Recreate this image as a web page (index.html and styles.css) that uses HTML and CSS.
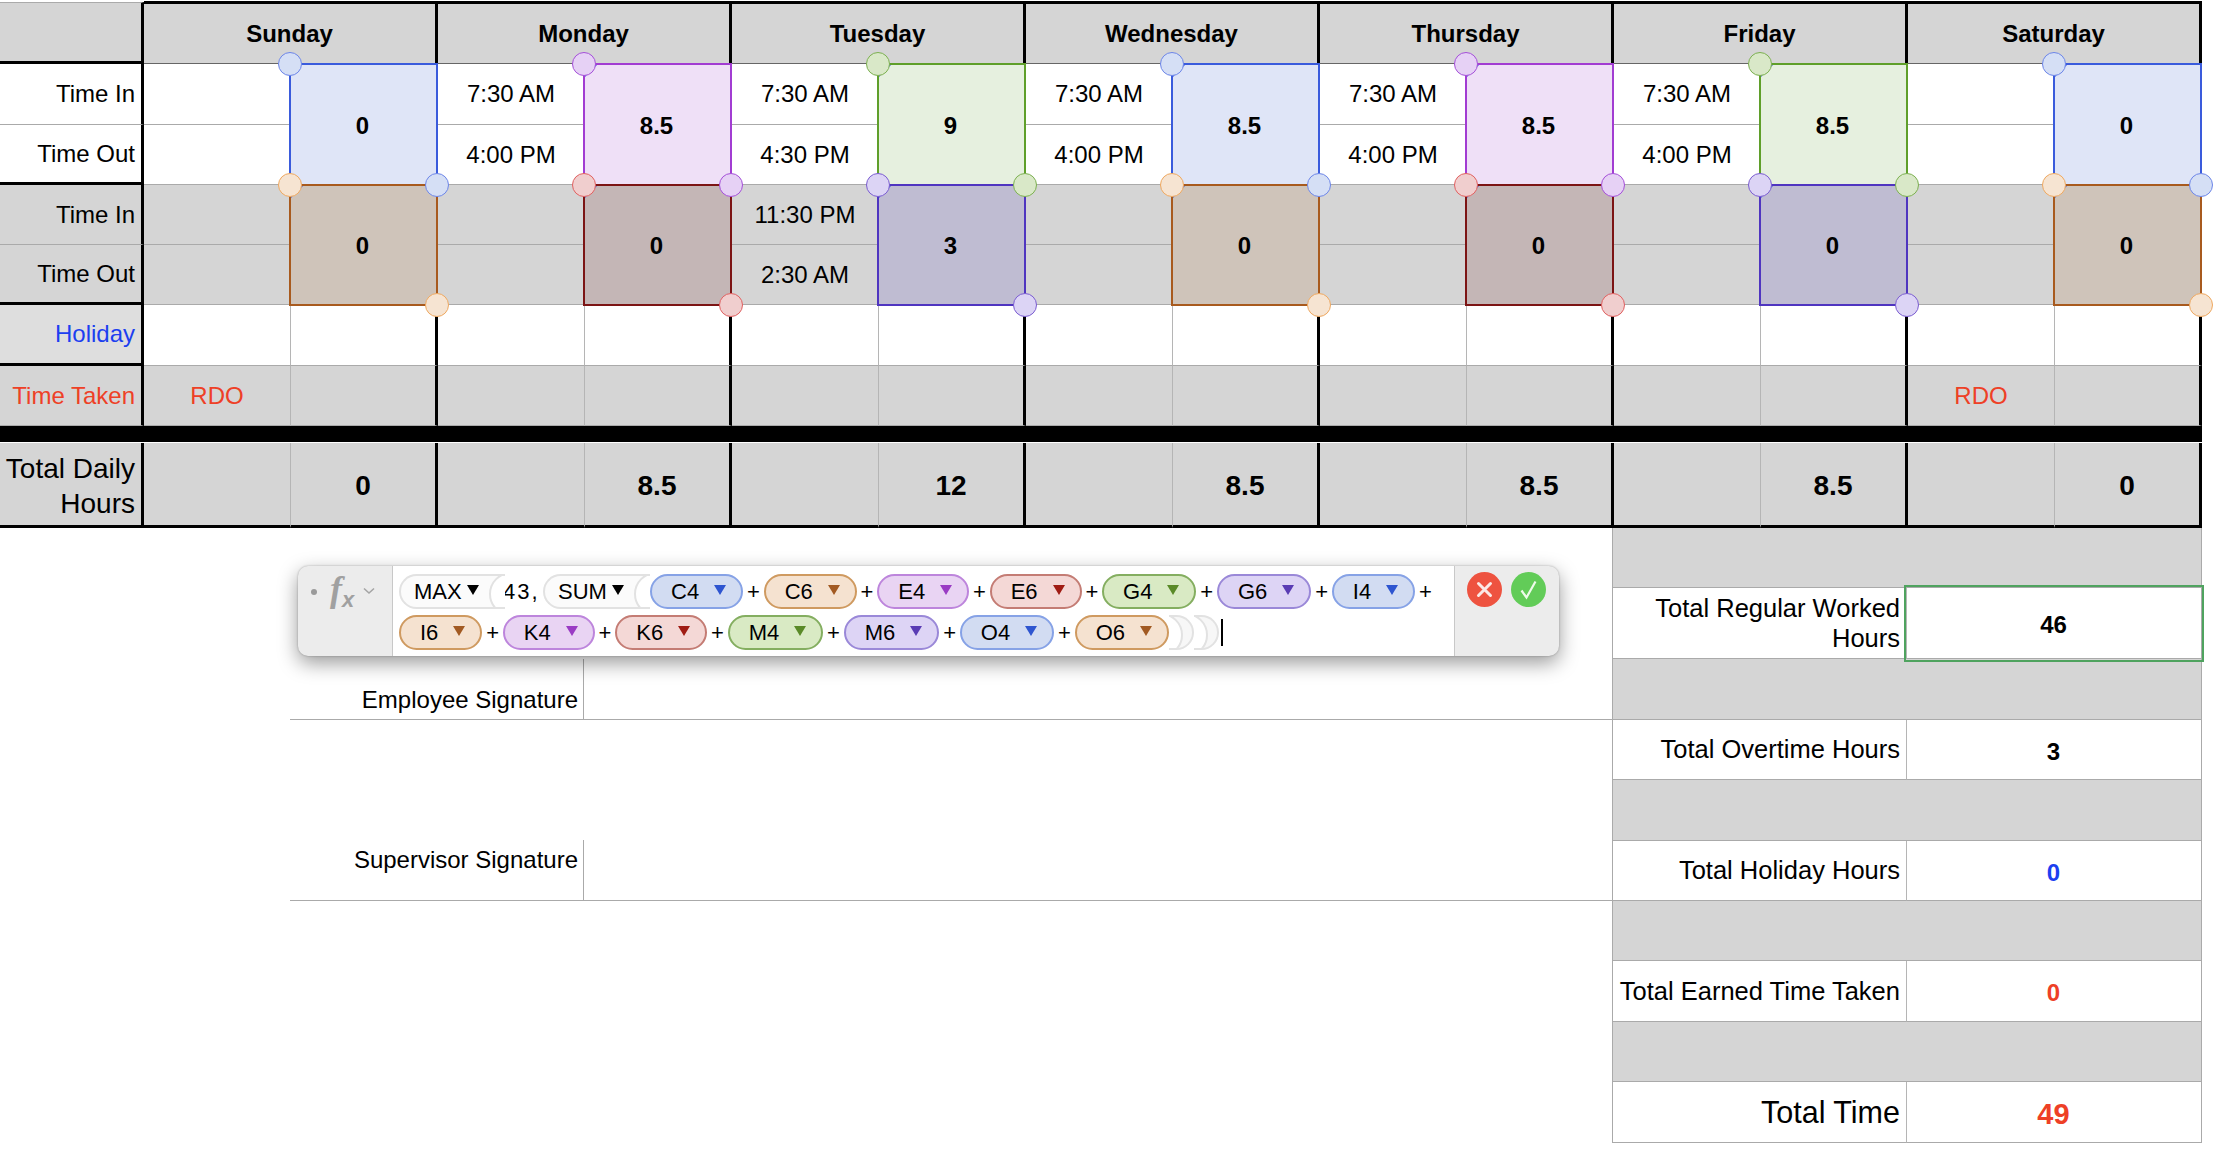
FILE: index.html
```html
<!DOCTYPE html>
<html lang="en">
<head>
  <meta charset="UTF-8" />
  <title>Timesheet</title>
  <link rel="stylesheet" href="styles.css">
</head>
<body>

  <main class="sheet">
    <!-- day headers -->
    <div class="corner"></div>
    <div class="day">Sunday</div>
    <div class="day">Monday</div>
    <div class="day">Tuesday</div>
    <div class="day">Wednesday</div>
    <div class="day">Thursday</div>
    <div class="day">Friday</div>
    <div class="day">Saturday</div>

    <!-- regular shift -->
    <div class="label">Time In</div>
    <div class="cell"></div>
    <div class="range blue no-mark"><i class="knob tl"></i>0<i class="knob br"></i></div>
    <div class="cell">7:30 AM</div>
    <div class="range purple"><i class="knob tl"></i>8.5<i class="knob br"></i></div>
    <div class="cell">7:30 AM</div>
    <div class="range green"><i class="knob tl"></i>9<i class="knob br"></i></div>
    <div class="cell">7:30 AM</div>
    <div class="range blue"><i class="knob tl"></i>8.5<i class="knob br"></i></div>
    <div class="cell">7:30 AM</div>
    <div class="range purple"><i class="knob tl"></i>8.5<i class="knob br"></i></div>
    <div class="cell">7:30 AM</div>
    <div class="range green"><i class="knob tl"></i>8.5<i class="knob br"></i></div>
    <div class="cell"></div>
    <div class="range blue"><i class="knob tl"></i>0<i class="knob br"></i></div>

    <div class="label block-end">Time Out</div>
    <div class="cell"></div>
    <div class="cell">4:00 PM</div>
    <div class="cell">4:30 PM</div>
    <div class="cell">4:00 PM</div>
    <div class="cell">4:00 PM</div>
    <div class="cell">4:00 PM</div>
    <div class="cell"></div>

    <!-- second shift -->
    <div class="label shade">Time In</div>
    <div class="cell shade"></div>
    <div class="range brown"><i class="knob tl"></i>0<i class="knob br"></i></div>
    <div class="cell shade"></div>
    <div class="range red"><i class="knob tl"></i>0<i class="knob br"></i></div>
    <div class="cell shade">11:30 PM</div>
    <div class="range indigo"><i class="knob tl"></i>3<i class="knob br"></i></div>
    <div class="cell shade"></div>
    <div class="range brown"><i class="knob tl"></i>0<i class="knob br"></i></div>
    <div class="cell shade"></div>
    <div class="range red"><i class="knob tl"></i>0<i class="knob br"></i></div>
    <div class="cell shade"></div>
    <div class="range indigo"><i class="knob tl"></i>0<i class="knob br"></i></div>
    <div class="cell shade"></div>
    <div class="range brown"><i class="knob tl"></i>0<i class="knob br"></i></div>

    <div class="label shade block-end">Time Out</div>
    <div class="cell shade"></div>
    <div class="cell shade"></div>
    <div class="cell shade">2:30 AM</div>
    <div class="cell shade"></div>
    <div class="cell shade"></div>
    <div class="cell shade"></div>
    <div class="cell shade"></div>

    <!-- holiday -->
    <div class="label holiday block-end">Holiday</div>
    <div class="cell"></div><div class="cell day-end"></div>
    <div class="cell"></div><div class="cell day-end"></div>
    <div class="cell"></div><div class="cell day-end"></div>
    <div class="cell"></div><div class="cell day-end"></div>
    <div class="cell"></div><div class="cell day-end"></div>
    <div class="cell"></div><div class="cell day-end"></div>
    <div class="cell"></div><div class="cell day-end"></div>

    <!-- time taken -->
    <div class="label shade taken">Time Taken</div>
    <div class="cell shade taken">RDO</div><div class="cell shade day-end"></div>
    <div class="cell shade"></div><div class="cell shade day-end"></div>
    <div class="cell shade"></div><div class="cell shade day-end"></div>
    <div class="cell shade"></div><div class="cell shade day-end"></div>
    <div class="cell shade"></div><div class="cell shade day-end"></div>
    <div class="cell shade"></div><div class="cell shade day-end"></div>
    <div class="cell shade taken">RDO</div><div class="cell shade day-end"></div>

    <div class="divider"></div>

    <!-- daily totals -->
    <div class="label shade total-label">Total Daily Hours</div>
    <div class="cell shade total"></div><div class="cell shade total day-end">0</div>
    <div class="cell shade total"></div><div class="cell shade total day-end">8.5</div>
    <div class="cell shade total"></div><div class="cell shade total day-end">12</div>
    <div class="cell shade total"></div><div class="cell shade total day-end">8.5</div>
    <div class="cell shade total"></div><div class="cell shade total day-end">8.5</div>
    <div class="cell shade total"></div><div class="cell shade total day-end">8.5</div>
    <div class="cell shade total"></div><div class="cell shade total day-end">0</div>
  </main>

  <section class="lower">
    <div class="signatures">
      <div class="sig-row sig-employee"><span class="sig-name">Employee Signature</span></div>
      <div class="sig-row sig-supervisor"><span class="sig-name">Supervisor Signature</span></div>
    </div>

    <div class="summary">
      <div class="band"></div>
      <div class="sum-label sum-tall">Total Regular Worked Hours</div>
      <div class="sum-value selected">46</div>
      <div class="band"></div>
      <div class="sum-label">Total Overtime Hours</div>
      <div class="sum-value">3</div>
      <div class="band"></div>
      <div class="sum-label">Total Holiday Hours</div>
      <div class="sum-value is-blue">0</div>
      <div class="band"></div>
      <div class="sum-label">Total Earned Time Taken</div>
      <div class="sum-value is-red">0</div>
      <div class="band"></div>
      <div class="sum-label sum-big">Total Time</div>
      <div class="sum-value sum-big is-red">49</div>
    </div>
  </section>

  <!-- formula editor floating over the sheet -->
  <div class="editor">
    <div class="editor-left">
      <span class="dot"></span>
      <span class="fx">f<span class="fx-x">x</span></span>
      <svg class="chevron" width="12" height="8" viewBox="0 0 12 8"><path d="M1 1.5 L6 6 L11 1.5" fill="none" stroke="#a5a5a5" stroke-width="1.6"/></svg>
    </div>
    <div class="formula">
      <span class="pill fn">MAX<b class="arrow"></b></span>
      <span class="const">43,</span>
      <span class="pill fn fn-sum">SUM<b class="arrow"></b></span>
      <span class="pill p-blue">C4<b class="arrow"></b></span><span class="op">+</span>
      <span class="pill p-brown">C6<b class="arrow"></b></span><span class="op">+</span>
      <span class="pill p-purple">E4<b class="arrow"></b></span><span class="op">+</span>
      <span class="pill p-red">E6<b class="arrow"></b></span><span class="op">+</span>
      <span class="pill p-green">G4<b class="arrow"></b></span><span class="op">+</span>
      <span class="pill p-indigo">G6<b class="arrow"></b></span><span class="op">+</span>
      <span class="pill p-blue">I4<b class="arrow"></b></span><span class="op">+</span>
      <span class="pill p-brown">I6<b class="arrow"></b></span><span class="op">+</span>
      <span class="pill p-purple">K4<b class="arrow"></b></span><span class="op">+</span>
      <span class="pill p-red">K6<b class="arrow"></b></span><span class="op">+</span>
      <span class="pill p-green">M4<b class="arrow"></b></span><span class="op">+</span>
      <span class="pill p-indigo">M6<b class="arrow"></b></span><span class="op">+</span>
      <span class="pill p-blue">O4<b class="arrow"></b></span><span class="op">+</span>
      <span class="pill p-brown">O6<b class="arrow"></b></span>
      <span class="close"></span><span class="close"></span>
      <span class="caret"></span>
    </div>
    <div class="editor-right">
      <svg class="btn" width="35" height="35" viewBox="0 0 35 35"><circle cx="17.5" cy="17.5" r="17.5" fill="#ee5340"/><path d="M11.5 11.5 L23.5 23.5 M23.5 11.5 L11.5 23.5" stroke="#fbe9e6" stroke-width="3" stroke-linecap="round"/></svg>
      <svg class="btn" width="35" height="35" viewBox="0 0 35 35"><circle cx="17.5" cy="17.5" r="17.5" fill="#62cc58"/><path d="M10.5 18.5 L15.5 25.5 L24.5 9.5" fill="none" stroke="#eefbea" stroke-width="2.2"/></svg>
    </div>
  </div>

</body>
</html>
```

FILE: styles.css
```css
* { box-sizing: border-box; }
html, body {
  margin: 0;
  padding: 0;
  background: #fff;
}
body {
  position: relative;
  font-family: "Liberation Sans", Arial, sans-serif;
  font-size: 24px;
  color: #000;
  overflow: hidden;
  height: 1154px;
}

/* ---- main sheet ---- */
.sheet {
  display: grid;
  width: 2202px;
  padding-top: 1px;
  grid-template-columns: 144px repeat(14, 147px);
  grid-template-rows: 63px 61px 60px 60px 60px 61px 60px 17px 85px;
}
.corner {
  margin-top: 1px;
  background: #d5d5d5;
  border-top: 1px solid #aaa;
  border-right: 3px solid #000;
  border-bottom: 3px solid #000;
}
.day {
  grid-column: span 2;
  display: flex;
  align-items: center;
  justify-content: center;
  padding-top: 1px;
  background: #d5d5d5;
  font-weight: bold;
  border-top: 3px solid #000;
  border-right: 3px solid #000;
  border-bottom: 1px solid #666;
}
.label {
  display: flex;
  align-items: center;
  justify-content: flex-end;
  padding-right: 6px;
  background: #fff;
  text-align: right;
  border-right: 3px solid #000;
  border-bottom: 1px solid #aaa;
}
.label.block-end { border-bottom: 3px solid #000; }
.label.shade { background: #d5d5d5; }
.label.holiday { background: #dedede; color: #1c3ff0; }
.label.taken { color: #ee4026; }
.label.total-label {
  padding-top: 4px;
  font-size: 28px;
  line-height: 35px;
  border-bottom: 3px solid #000;
}
.cell {
  display: flex;
  align-items: center;
  justify-content: center;
  background: #fff;
  border-right: 1px solid #b5b5b5;
  border-bottom: 1px solid #aaa;
}
.cell.shade { background: #d5d5d5; }
.cell.day-end { border-right: 3px solid #000; }
.cell.taken { color: #ee4026; }
.cell.total {
  padding-top: 3px;
  font-size: 28px;
  font-weight: bold;
  border-bottom: 3px solid #000;
}
.divider {
  grid-column: 1 / -1;
  background: #000;
  margin-bottom: 1px;
}

/* merged cells shown as coloured formula ranges */
.range {
  grid-row: span 2;
  position: relative;
  display: flex;
  align-items: center;
  justify-content: center;
  margin: -1px 0 -1px -2px;
  padding: 2px 2px 0 0;
  font-weight: bold;
  background: var(--fill);
  border: 2px solid var(--line);
}
.range::before {
  content: "";
  position: absolute;
  top: 0;
  left: 0;
  border-top: 12px solid #3a5bdc;
  border-right: 12px solid transparent;
}
.range.no-mark::before { display: none; }
.knob {
  position: absolute;
  z-index: 2;
  width: 24px;
  height: 24px;
  border-radius: 50%;
  background: var(--knob);
  border: 1px solid var(--knob-line);
}
.knob.tl { top: -13px; left: -13px; }
.knob.br { bottom: -13px; right: -13px; }

.blue   { --fill: #dfe5f7; --line: #3a5bdc; --knob: #d5dff5; --knob-line: #6c85e8; }
.purple { --fill: #efe0f7; --line: #a23cd2; --knob: #e6d1f5; --knob-line: #a44fd8; }
.green  { --fill: #e6f0df; --line: #5f9f2a; --knob: #d9e8c8; --knob-line: #7cb050; }
.brown  { --fill: #cfc4ba; --line: #a85a1e; --knob: #f6e4d2; --knob-line: #eea860; }
.red    { --fill: #c4b6b6; --line: #7c1414; --knob: #f0cece; --knob-line: #e06060; }
.indigo { --fill: #bfbcd2; --line: #4f35c0; --knob: #dcd4f5; --knob-line: #7a5cd0; }

/* ---- lower part ---- */
.lower { display: flex; }
.signatures {
  width: 1612px;
  padding-left: 290px;
}
.sig-row {
  border-bottom: 1px solid #aaa;
  height: 61px;
}
.sig-employee { margin-top: 131px; }
.sig-supervisor { margin-top: 120px; }
.sig-name {
  display: flex;
  justify-content: flex-end;
  width: 294px;
  height: 100%;
  padding-right: 5px;
  border-right: 1px solid #aaa;
}
.sig-employee .sig-name { align-items: flex-end; padding-bottom: 5px; }
.sig-supervisor .sig-name { align-items: flex-start; padding-top: 6px; }

.summary {
  display: grid;
  width: 590px;
  grid-template-columns: 294px 294px;
  grid-template-rows: 60px 71px 61px 60px 61px 60px 60px 61px 60px 61px;
  border-left: 1px solid #aaa;
  border-right: 1px solid #aaa;
}
.band {
  grid-column: span 2;
  background: #d5d5d5;
  border-bottom: 1px solid #aaa;
}
.sum-label {
  display: flex;
  align-items: center;
  justify-content: flex-end;
  padding: 0 6px 0 0;
  font-size: 25.5px;
  text-align: right;
  border-right: 1px solid #b5b5b5;
  border-bottom: 1px solid #aaa;
}
.sum-tall { line-height: 30px; }
.sum-value {
  display: flex;
  align-items: center;
  justify-content: center;
  padding: 4px 1px 0 0;
  font-weight: bold;
  border-bottom: 1px solid #aaa;
}
.sum-label.sum-big { font-size: 30.5px; }
.sum-value.sum-big { font-size: 29px; }
.is-blue { color: #1c3ff0; }
.is-red { color: #ee4026; }
.selected {
  position: relative;
  z-index: 1;
  outline: 2px solid #4fa35f;
  outline-offset: 1px;
}

/* ---- formula editor ---- */
.editor {
  position: absolute;
  top: 566px;
  left: 298px;
  display: flex;
  width: 1261px;
  height: 90px;
  background: #ececec;
  border-radius: 10px;
  box-shadow: 0 7px 20px rgba(0, 0, 0, 0.4), 0 0 2px rgba(0, 0, 0, 0.3);
}
.editor-left {
  display: flex;
  align-items: flex-start;
  width: 95px;
  padding: 6px 0 0 13px;
  border-right: 1px solid #c8c8c8;
}
.dot {
  width: 6px;
  height: 6px;
  margin: 17px 13px 0 0;
  border-radius: 50%;
  background: #9a9a9a;
}
.fx {
  font-family: "Liberation Serif", serif;
  font-size: 36px;
  font-style: italic;
  font-weight: bold;
  line-height: 34px;
  color: #a0a0a0;
}
.fx-x {
  font-family: "Liberation Sans", sans-serif;
  font-size: 22px;
  line-height: 0;
  vertical-align: -6px;
}
.chevron { margin: 15px 0 0 9px; }
.formula {
  display: flex;
  flex-wrap: wrap;
  align-content: flex-start;
  align-items: center;
  gap: 6px 0;
  flex: 1;
  padding: 8px 0 0 6px;
  background: #fff;
  font-size: 22px;
}
.editor-right {
  display: flex;
  align-items: flex-start;
  gap: 9px;
  width: 105px;
  padding: 6px 0 0 12px;
  border-left: 1px solid #c8c8c8;
}
.pill {
  display: flex;
  align-items: center;
  gap: 15px;
  height: 35px;
  padding: 0 15px 0 19px;
  border-radius: 18px;
  background: var(--fill);
  border: 2px solid var(--line);
}
.arrow {
  width: 0;
  height: 0;
  margin-top: -4px;
  border-left: 6px solid transparent;
  border-right: 6px solid transparent;
  border-top: 10px solid var(--tip);
}
.op { width: 20.5px; text-align: center; }
.p-blue   { --fill: #d2dcf2; --line: #86a2e6; --tip: #2e55d0; }
.p-brown  { --fill: #f5e2d0; --line: #cf9a60; --tip: #a25a22; }
.p-purple { --fill: #e9d4f3; --line: #bd85dc; --tip: #9a3cc4; }
.p-red    { --fill: #f4d8d6; --line: #c47c74; --tip: #a01c14; }
.p-green  { --fill: #d9eac4; --line: #84ae60; --tip: #5a8a28; }
.p-indigo { --fill: #ddd4f5; --line: #9a88d8; --tip: #5a3cb4; }

.fn {
  position: relative;
  overflow: hidden;
  width: 106px;
  padding: 0 0 0 13px;
  gap: 5px;
  background: #fbfbfb;
  border: 2px solid #e2e2e2;
  border-right: none;
  border-radius: 18px 0 0 18px;
  --tip: #000;
}
.fn-sum { width: 107px; }
.fn::after {
  content: "";
  position: absolute;
  top: -4px;
  right: -28px;
  width: 40px;
  height: 40px;
  border-radius: 50%;
  background: #fff;
  border: 2px solid #e2e2e2;
}
.const { width: 40px; letter-spacing: 2px; margin-left: -2px; }
.close {
  position: relative;
  overflow: hidden;
  width: 25px;
  height: 35px;
  background: #f7f7f7;
  border: 2px solid #e2e2e2;
  border-left: none;
  border-radius: 0 18px 18px 0;
}
.close::before {
  content: "";
  position: absolute;
  top: -4px;
  left: -30px;
  width: 40px;
  height: 40px;
  border-radius: 50%;
  background: #fff;
  border: 2px solid #e2e2e2;
}
.caret {
  width: 2px;
  height: 27px;
  margin-left: 2px;
  background: #000;
}
```
